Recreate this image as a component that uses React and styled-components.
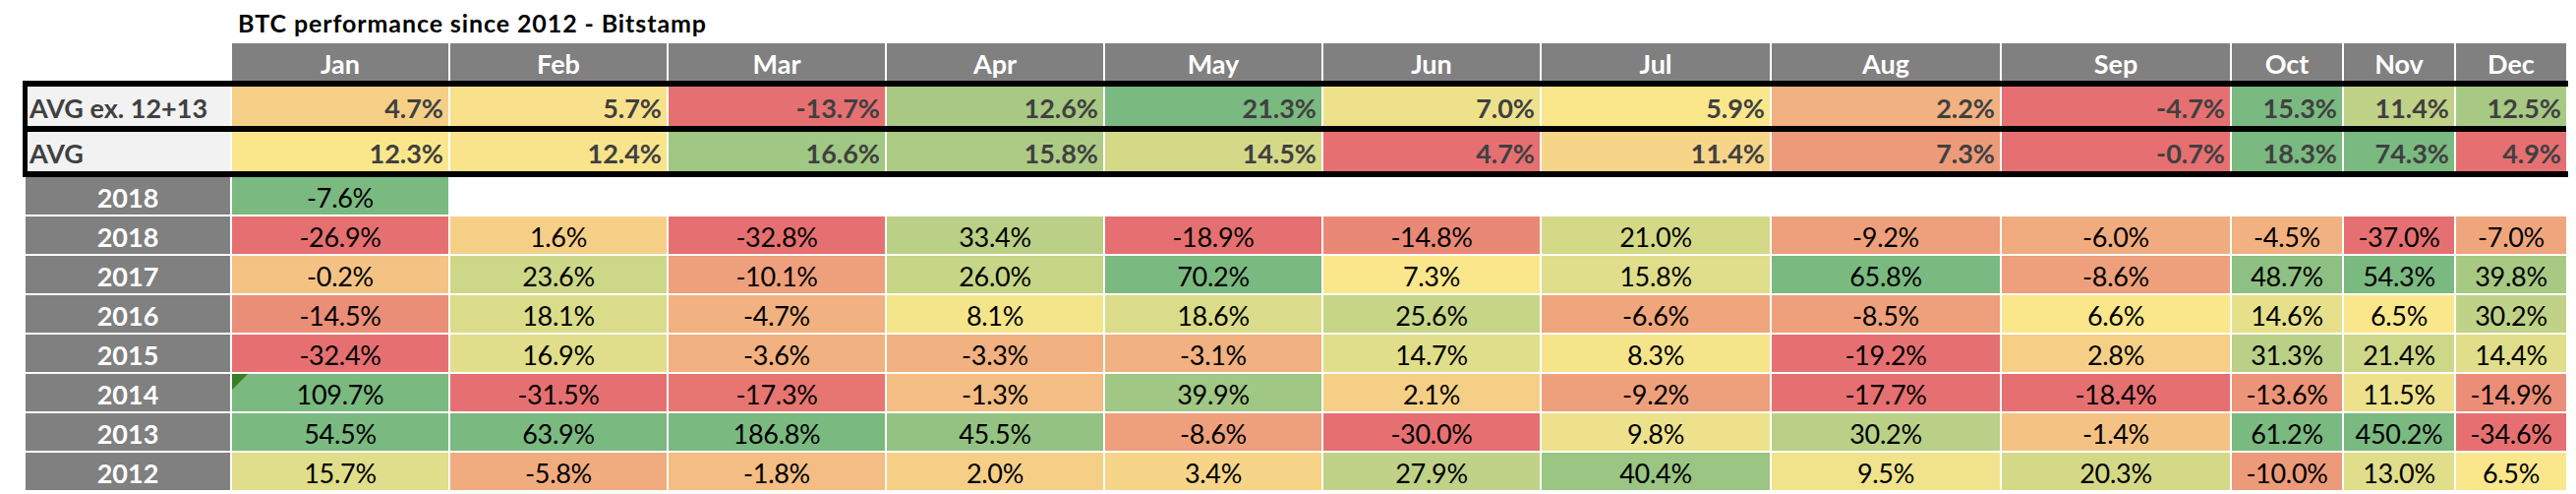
import React from 'react'
import styled, { createGlobalStyle } from 'styled-components'

const GlobalStyle = createGlobalStyle`
  html, body {
    margin: 0;
    padding: 0;
    background: #ffffff;
  }
  body {
    font-family: Lato, 'Liberation Sans', sans-serif;
  }
`

const MONTHS = ['Jan', 'Feb', 'Mar', 'Apr', 'May', 'Jun', 'Jul', 'Aug', 'Sep', 'Oct', 'Nov', 'Dec']
const MONTH_COLS = 'repeat(6, 220px) repeat(3, 232px) repeat(3, 112px)'

// value, colour position (-1 red .. 0 yellow .. 1 green)
const AVERAGES = [
  {
    label: 'AVG ex. 12+13',
    cells: [
      ['4.7%', -0.2], ['5.7%', -0.05], ['-13.7%', -1], ['12.6%', 0.65], ['21.3%', 1], ['7.0%', 0.1],
      ['5.9%', 0], ['2.2%', -0.45], ['-4.7%', -1], ['15.3%', 1], ['11.4%', 0.45], ['12.5%', 0.65]
    ]
  },
  {
    label: 'AVG',
    cells: [
      ['12.3%', 0], ['12.4%', -0.03], ['16.6%', 0.7], ['15.8%', 0.6], ['14.5%', 0.3], ['4.7%', -1],
      ['11.4%', -0.15], ['7.3%', -0.65], ['-0.7%', -1], ['18.3%', 1], ['74.3%', 1], ['4.9%', -1]
    ]
  }
]

const YEARS = [
  { year: '2018', cells: [['-7.6%', 1]] },
  {
    year: '2018',
    cells: [
      ['-26.9%', -1], ['1.6%', -0.2], ['-32.8%', -1], ['33.4%', 0.5], ['-18.9%', -1], ['-14.8%', -0.8],
      ['21.0%', 0.3], ['-9.2%', -0.6], ['-6.0%', -0.5], ['-4.5%', -0.45], ['-37.0%', -1], ['-7.0%', -0.55]
    ]
  },
  {
    year: '2017',
    cells: [
      ['-0.2%', -0.3], ['23.6%', 0.35], ['-10.1%', -0.6], ['26.0%', 0.4], ['70.2%', 1], ['7.3%', 0],
      ['15.8%', 0.2], ['65.8%', 1], ['-8.6%', -0.6], ['48.7%', 0.85], ['54.3%', 1], ['39.8%', 0.65]
    ]
  },
  {
    year: '2016',
    cells: [
      ['-14.5%', -0.75], ['18.1%', 0.25], ['-4.7%', -0.45], ['8.1%', 0.05], ['18.6%', 0.25], ['25.6%', 0.4],
      ['-6.6%', -0.55], ['-8.5%', -0.6], ['6.6%', 0], ['14.6%', 0.15], ['6.5%', 0], ['30.2%', 0.45]
    ]
  },
  {
    year: '2015',
    cells: [
      ['-32.4%', -1], ['16.9%', 0.2], ['-3.6%', -0.45], ['-3.3%', -0.45], ['-3.1%', -0.45], ['14.7%', 0.2],
      ['8.3%', 0.05], ['-19.2%', -1], ['2.8%', -0.2], ['31.3%', 0.5], ['21.4%', 0.35], ['14.4%', 0.2]
    ]
  },
  {
    year: '2014',
    flagged: true,
    cells: [
      ['109.7%', 1], ['-31.5%', -1], ['-17.3%', -0.95], ['-1.3%', -0.35], ['39.9%', 0.7], ['2.1%', -0.2],
      ['-9.2%', -0.6], ['-17.7%', -1], ['-18.4%', -1], ['-13.6%', -0.7], ['11.5%', 0.1], ['-14.9%', -0.75]
    ]
  },
  {
    year: '2013',
    cells: [
      ['54.5%', 1], ['63.9%', 1], ['186.8%', 1], ['45.5%', 0.8], ['-8.6%', -0.6], ['-30.0%', -1],
      ['9.8%', 0.1], ['30.2%', 0.5], ['-1.4%', -0.3], ['61.2%', 1], ['450.2%', 1], ['-34.6%', -1]
    ]
  },
  {
    year: '2012',
    cells: [
      ['15.7%', 0.2], ['-5.8%', -0.5], ['-1.8%', -0.35], ['2.0%', -0.2], ['3.4%', -0.15], ['27.9%', 0.45],
      ['40.4%', 0.75], ['9.5%', 0.08], ['20.3%', 0.3], ['-10.0%', -0.65], ['13.0%', 0.2], ['6.5%', 0]
    ]
  }
]

const RED = [230, 112, 113]
const YELLOW = [250, 231, 140]
const GREEN = [122, 185, 128]

const heat = t => {
  const to = t < 0 ? RED : GREEN
  const k = Math.min(1, Math.abs(t))
  const c = YELLOW.map((v, i) => Math.round(v + (to[i] - v) * k))
  return `rgb(${c[0]}, ${c[1]}, ${c[2]})`
}

const Page = styled.div`
  padding: 8px 0 0 26px;
  width: 2594px;
`

const Grid = styled.div`
  display: grid;
  grid-template-columns: ${p => p.$first} ${MONTH_COLS};
  column-gap: 2px;
  background: #ffffff;
`

const Title = styled.div`
  grid-column: 2 / -1;
  padding-left: 6px;
  height: 30px;
  line-height: 30px;
  margin-bottom: 6px;
  font-size: 25px;
  letter-spacing: 0.9px;
  font-weight: 700;
  color: #000000;
  white-space: nowrap;
`

const MonthHead = styled.div`
  height: 38px;
  display: flex;
  align-items: center;
  justify-content: center;
  padding-top: 2px;
  box-sizing: border-box;
  background: #808080;
  color: #ffffff;
  font-size: 27px;
  font-weight: 700;
`

const AvgBox = styled.div`
  margin-left: -3px;
  width: max-content;
  border-top: 6px solid #000000;
  border-bottom: 6px solid #000000;
  border-left: 5px solid #000000;
  padding-right: 2px;
  background: #ffffff;
`

const Divider = styled.div`
  height: 6px;
  background: #000000;
`

const AvgLabel = styled.div`
  height: 40px;
  display: flex;
  align-items: center;
  padding: 3px 0 0 2px;
  box-sizing: border-box;
  background: #f2f2f2;
  color: #404040;
  font-size: 27px;
  font-weight: 700;
  white-space: nowrap;
`

const AvgValue = styled.div`
  height: 40px;
  display: flex;
  align-items: center;
  justify-content: flex-end;
  padding: 3px 5px 0 0;
  box-sizing: border-box;
  background: ${p => p.$bg};
  color: #404040;
  font-size: 27px;
  font-weight: 700;
`

const YearRows = styled.div`
  display: grid;
  row-gap: 2px;
`

const YearLabel = styled.div`
  height: 38px;
  display: flex;
  align-items: center;
  justify-content: center;
  padding-top: 3px;
  box-sizing: border-box;
  background: #808080;
  color: #ffffff;
  font-size: 27px;
  font-weight: 700;
`

const Value = styled.div`
  position: relative;
  height: 38px;
  display: flex;
  align-items: center;
  justify-content: center;
  padding-top: 3px;
  box-sizing: border-box;
  background: ${p => p.$bg || '#ffffff'};
  color: #000000;
  font-size: 27px;
  letter-spacing: -0.3px;
`

const ErrorFlag = styled.span`
  position: absolute;
  top: 0;
  left: 0;
  width: 0;
  height: 0;
  border-top: 16px solid #3b7d23;
  border-right: 16px solid transparent;
`

const App = () => (
  <Page>
    <GlobalStyle />
    <Grid $first='208px'>
      <Title>BTC performance since 2012 - Bitstamp</Title>
      <div />
      {MONTHS.map(m => (
        <MonthHead key={m}>{m}</MonthHead>
      ))}
    </Grid>

    <AvgBox>
      {AVERAGES.map((row, i) => (
        <React.Fragment key={row.label}>
          {i > 0 && <Divider />}
          <Grid $first='206px'>
            <AvgLabel>{row.label}</AvgLabel>
            {row.cells.map(([v, t], j) => (
              <AvgValue key={j} $bg={heat(t)}>{v}</AvgValue>
            ))}
          </Grid>
        </React.Fragment>
      ))}
    </AvgBox>

    <YearRows>
      {YEARS.map((row, i) => (
        <Grid $first='208px' key={i}>
          <YearLabel>{row.year}</YearLabel>
          {MONTHS.map((m, j) => {
            const cell = row.cells[j]
            return (
              <Value key={m} $bg={cell ? heat(cell[1]) : null}>
                {row.flagged && j === 0 && <ErrorFlag />}
                {cell ? cell[0] : ''}
              </Value>
            )
          })}
        </Grid>
      ))}
    </YearRows>
  </Page>
)

export default App
